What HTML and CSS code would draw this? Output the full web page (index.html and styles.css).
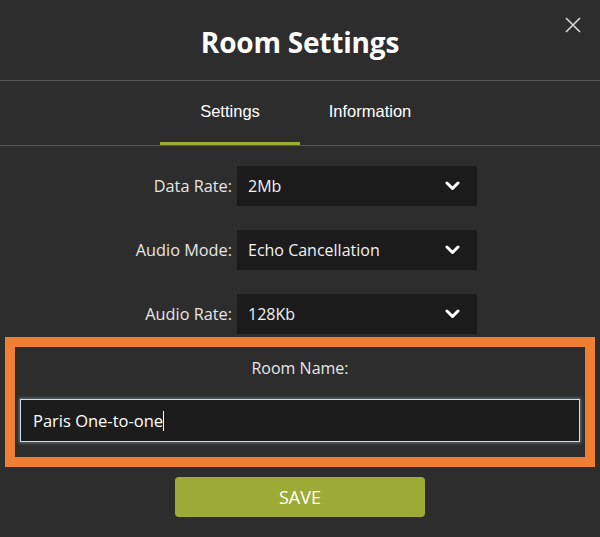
FILE: index.html
```html
<!DOCTYPE html>
<html>
<head>
<meta charset="utf-8">
<link rel="stylesheet" href="styles.css">
</head>
<body>
<div class="dialog">
  <header class="header">
    <h1 class="title">Room Settings</h1>
    <button class="close" aria-label="Close">
      <svg width="16" height="16" viewBox="0 0 16 16"><path d="M1 1 L15 15 M15 1 L1 15" stroke="#d8d8d8" stroke-width="1.6" fill="none"/></svg>
    </button>
  </header>
  <nav class="tabs">
    <div class="tab active">Settings</div>
    <div class="tab">Information</div>
  </nav>
  <section class="form">
    <div class="row">
      <label class="label">Data Rate:</label>
      <div class="select"><span>2Mb</span><svg class="chev" width="15" height="10" viewBox="0 0 15 10"><polyline points="2,2 7.5,7.5 13,2" fill="none" stroke="#fff" stroke-width="3" stroke-linecap="round" stroke-linejoin="round"/></svg></div>
    </div>
    <div class="row">
      <label class="label">Audio Mode:</label>
      <div class="select"><span>Echo Cancellation</span><svg class="chev" width="15" height="10" viewBox="0 0 15 10"><polyline points="2,2 7.5,7.5 13,2" fill="none" stroke="#fff" stroke-width="3" stroke-linecap="round" stroke-linejoin="round"/></svg></div>
    </div>
    <div class="row">
      <label class="label">Audio Rate:</label>
      <div class="select"><span>128Kb</span><svg class="chev" width="15" height="10" viewBox="0 0 15 10"><polyline points="2,2 7.5,7.5 13,2" fill="none" stroke="#fff" stroke-width="3" stroke-linecap="round" stroke-linejoin="round"/></svg></div>
    </div>
  </section>
  <section class="highlight">
    <div class="name-label">Room Name:</div>
    <div class="input"><span class="value">Paris One-to-one</span><span class="caret"></span></div>
  </section>
  <div class="actions">
    <button class="save">SAVE</button>
  </div>
</div>
</body>
</html>
```
FILE: styles.css
```css
html, body {
  margin: 0;
  padding: 0;
  background: #2d2d2d;
}
.dialog {
  width: 600px;
  height: 537px;
  background: #2d2d2d;
  color: #f2f2f2;
  font-family: "Open Sans", "Noto Sans", sans-serif;
  position: relative;
  overflow: hidden;
}
.header {
  height: 80px;
  display: flex;
  align-items: center;
  justify-content: center;
  border-bottom: 1px solid #555;
}
.title {
  margin: 0;
  font-size: 28px;
  font-weight: 700;
  color: #fff;
  letter-spacing: -0.2px;
  padding-top: 3px;
}
.close {
  position: absolute;
  top: 17px;
  left: 565px;
  width: 16px;
  height: 16px;
  padding: 0;
  border: 0;
  background: transparent;
  display: block;
}
.close svg { display: block; }
.tabs {
  display: flex;
  justify-content: center;
  border-bottom: 1px solid #555;
  height: 64px;
}
.tab {
  width: 140px;
  box-sizing: border-box;
  height: 64px;
  display: flex;
  align-items: center;
  justify-content: center;
  font-family: "Liberation Sans", Arial, sans-serif;
  font-size: 16.5px;
  color: #fff;
  border-bottom: 3px solid transparent;
}
.tab.active {
  border-bottom-color: #9cab36;
}
.form {
  padding-top: 20px;
  display: flex;
  flex-direction: column;
  gap: 24px;
}
.row {
  display: grid;
  grid-template-columns: 232px 240px;
  column-gap: 5px;
  align-items: center;
}
.label {
  text-align: right;
  font-size: 16.3px;
  color: #e6e6e6;
}
.select {
  height: 40px;
  background: linear-gradient(to bottom, #1c1c1c, #1a1a1a);
  display: flex;
  align-items: center;
  justify-content: space-between;
  padding: 0 17px 0 11px;
  font-size: 16px;
  color: #f2f2f2;
}
.chev { display: block; }
.highlight {
  margin: 3px 5px 0 5px;
  border: 10px solid #ef7f33;
  height: 110px;
  box-sizing: content-box;
  padding: 0 5px;
  display: flex;
  flex-direction: column;
}
.name-label {
  text-align: center;
  font-size: 16px;
  color: #e6e6e6;
  padding-top: 10px;
  height: 42px;
}
.input {
  height: 41px;
  border: 1px solid #c5e0ee;
  box-shadow: 0 0 3px 1px rgba(170, 200, 220, 0.45);
  background: #1c1c1c;
  display: flex;
  align-items: center;
  padding-left: 12px;
  font-size: 16.5px;
  color: #fff;
}
.caret {
  display: inline-block;
  width: 1px;
  height: 20px;
  background: #fff;
  margin-left: 0;
}
.actions {
  display: flex;
  justify-content: center;
  padding-top: 10px;
}
.save {
  width: 250px;
  height: 40px;
  border: 0;
  border-radius: 4px;
  background: #9cab36;
  color: #fff;
  font-family: "Open Sans", "Noto Sans", sans-serif;
  font-size: 18px;
  padding: 0;
}
```
